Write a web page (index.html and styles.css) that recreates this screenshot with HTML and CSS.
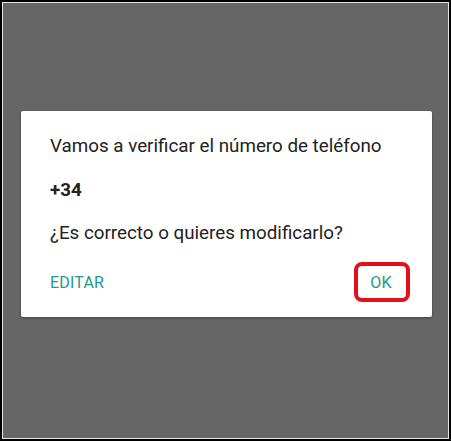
FILE: index.html
```html
<!DOCTYPE html>
<html lang="es">
<head>
<meta charset="utf-8">
<title>Verificar número</title>
<link rel="stylesheet" href="styles.css">
</head>
<body>
<div class="screen">
  <div class="backdrop">
    <div class="dialog">
      <p class="msg">Vamos a verificar el número de teléfono</p>
      <p class="phone">+34</p>
      <p class="msg q">¿Es correcto o quieres modificarlo?</p>
      <div class="actions">
        <span class="btn">EDITAR</span>
        <span class="btn ok">OK</span>
      </div>
    </div>
  </div>
</div>
</body>
</html>
```

FILE: styles.css
```css
* { box-sizing: border-box; }
html, body { margin: 0; padding: 0; background: #000; }
body { font-family: Roboto, "Noto Sans", "Liberation Sans", sans-serif; }
.screen {
  width: 451px;
  height: 441px;
  border: 2px solid #000;
}
.backdrop {
  height: 100%;
  border: 1px solid #e6e6e6;
  background: #666666;
  padding-top: 108px;
  padding-left: 18px;
}
.dialog {
  width: 411px;
  height: 206px;
  background: #fff;
  border-radius: 2px;
  box-shadow: 0 1px 3px rgba(0,0,0,0.35);
  padding: 23px 22px 15px 29px;
}
.msg, .phone {
  margin: 0;
  font-size: 18.8px;
  line-height: 25px;
  color: #222222;
}
.phone { font-weight: 700; margin-top: 19px; }
.q { margin-top: 18px; }
.actions {
  display: flex;
  justify-content: space-between;
  align-items: center;
  margin-top: 16px;
}
.btn {
  font-size: 16px;
  color: #22998a;
  letter-spacing: 0.2px;
}
.ok {
  width: 56px;
  height: 40px;
  border: 4px solid #e3101c;
  border-radius: 8px;
  display: flex;
  align-items: center;
  justify-content: center;
  padding-right: 2px;
}
```
